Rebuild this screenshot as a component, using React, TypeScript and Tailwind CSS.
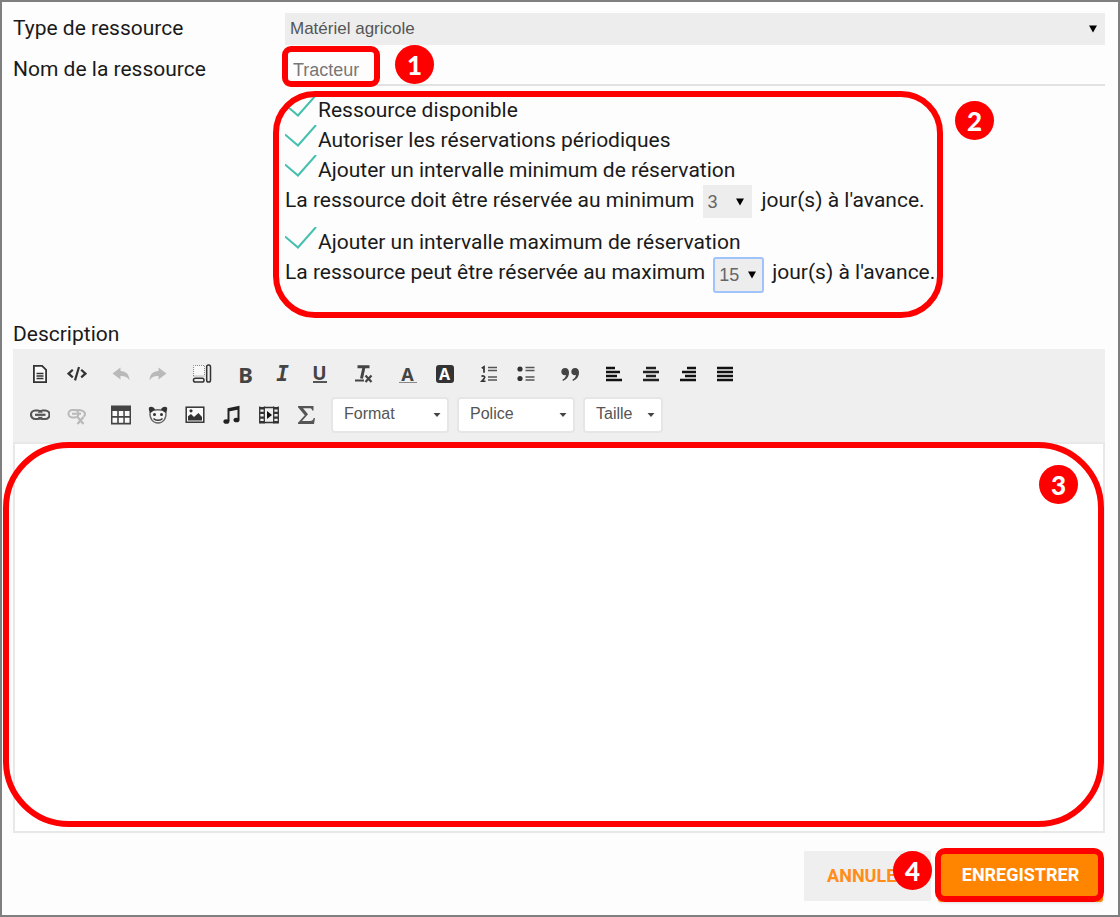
import type { ReactNode } from "react";

function Icon({ children, muted = false }: { children: ReactNode; muted?: boolean }) {
  return (
    <svg
      viewBox="0 0 20 20"
      aria-hidden="true"
      className={muted ? "size-5 text-[#b9b9b9]" : "size-5 text-[#333333]"}
      fill="none"
      stroke="currentColor"
      strokeWidth="2"
    >
      {children}
    </svg>
  );
}

function Letter({ children, className = "" }: { children: ReactNode; className?: string }) {
  return (
    <span className={`font-['Noto_Sans',sans-serif] font-bold text-[#444444] ${className}`}>{children}</span>
  );
}

type Tool = { name: string; icon: ReactNode };

const firstRow: Tool[][] = [
  [
    {
      name: "Modèles",
      icon: (
        <Icon>
          <path d="M3.9 1.9h8.2l4 4v12.2H3.9z" strokeWidth="1.8" fill="#fafafa" />
          <path d="M6.5 9.5h7M6.5 12h7M6.5 14.5h7" strokeWidth="1.5" />
        </Icon>
      ),
    },
    {
      name: "Source",
      icon: (
        <Icon>
          <path d="M5.8 5.8L1.6 9.6l4.2 3.8M14.2 5.8l4.2 3.8-4.2 3.8M12 3L8 16.4" strokeWidth="2.2" />
        </Icon>
      ),
    },
  ],
  [
    {
      name: "Annuler la saisie",
      icon: (
        <Icon muted>
          <path
            d="M9.500 3.500L1.500 9.500l8 6v-3.500c4-.3 6.500 1 9 4.200C18.300 10.500 15 7.300 9.500 7z"
            fill="currentColor"
            stroke="none"
          />
        </Icon>
      ),
    },
    {
      name: "Rétablir la saisie",
      icon: (
        <Icon muted>
          <path
            d="M10.500 3.500l8 6-8 6v-3.500c-4-.3-6.500 1-9 4.200C1.700 10.500 5 7.300 10.500 7z"
            fill="currentColor"
            stroke="none"
          />
        </Icon>
      ),
    },
  ],
  [
    {
      name: "Afficher les blocs",
      icon: (
        <Icon>
          <path d="M1.500 12V1.500h11V12z" strokeWidth="1" strokeDasharray="1 1" fill="#f8f8f8" stroke="#888888" />
          <rect x="1.500" y="14.200" width="10.500" height="3.800" rx="1.800" strokeWidth="1.500" />
          <rect x="14.700" y="1" width="3.800" height="17" rx="1.800" strokeWidth="1.500" />
        </Icon>
      ),
    },
  ],
  [
    { name: "Gras", icon: <Letter className="text-[22px]">B</Letter> },
    {
      name: "Italique",
      icon: (
        <span className="font-['DejaVu_Sans_Mono',monospace] text-[21px] font-bold italic text-[#444444]">I</span>
      ),
    },
    {
      name: "Souligné",
      icon: (
        <span className="flex flex-col items-center">
          <Letter className="text-[19px] leading-4">U</Letter>
          <span className="h-0.5 w-3.5 bg-[#555555]" />
        </span>
      ),
    },
  ],
  [
    {
      name: "Supprimer la mise en forme",
      icon: (
        <svg viewBox="0 0 20 20" aria-hidden="true" className="size-5 text-[#444444]" fill="none" stroke="currentColor">
          <path d="M3.500 2.800h12M10 3L7.500 14.500" strokeWidth="3" />
          <path d="M1 16.500h9" strokeWidth="2" />
          <path d="M11.500 11.500l6 6.500M17.500 11.500l-6 6.500" strokeWidth="2.200" />
        </svg>
      ),
    },
  ],
  [
    {
      name: "Couleur du texte",
      icon: (
        <span className="flex flex-col items-center">
          <Letter className="text-[18px] leading-4">A</Letter>
          <span className="h-px w-[18px] bg-[#888888]" />
        </span>
      ),
    },
    {
      name: "Couleur de fond",
      icon: (
        <span className="flex size-[18px] items-center justify-center rounded-[3px] bg-[#333333] font-['Noto_Sans',sans-serif] text-base leading-4 font-bold text-white">
          A
        </span>
      ),
    },
  ],
  [
    {
      name: "Liste numérotée",
      icon: (
        <Icon>
          <path d="M9 3.500h9M9 6.500h9M9 13h9M9 16h9" strokeWidth="1.600" stroke="#555555" />
          <path d="M2.800 4.300L5 2.800v6" strokeWidth="1.700" />
          <path d="M2.500 12.500c1-1 3.300-.8 3.200.8 0 1.200-1.700 2.500-3 4h3.800" strokeWidth="1.600" />
        </Icon>
      ),
    },
    {
      name: "Liste à puces",
      icon: (
        <Icon>
          <path d="M9.500 3.500h9M9.500 6.500h9M9.500 13h9M9.500 16h9" strokeWidth="1.600" stroke="#555555" />
          <circle cx="4" cy="5" r="2.600" fill="currentColor" stroke="none" />
          <circle cx="4" cy="14.500" r="2.600" fill="currentColor" stroke="none" />
        </Icon>
      ),
    },
  ],
  [
    {
      name: "Citation",
      icon: (
        <Icon>
          <g fill="#444444" stroke="none">
            <path d="M5 4c2.600 0 4 1.800 4 4.500 0 4-2.300 7-6 8.500l-.6-1.200C4.600 14.500 5.700 13 5.900 11 3.500 11.600 1.300 10.200 1.300 7.700 1.300 5.600 2.900 4 5 4z" />
            <path d="M15 4c2.600 0 4 1.800 4 4.500 0 4-2.300 7-6 8.500l-.6-1.200c2.200-1.300 3.300-2.800 3.500-4.800-2.400.6-4.600-.8-4.600-3.300C11.300 5.600 12.900 4 15 4z" />
          </g>
        </Icon>
      ),
    },
  ],
  [
    {
      name: "Aligner à gauche",
      icon: (
        <Icon>
          <path d="M2 4h9M2 8h14M2 12h11M2 16h16" stroke="#111111" strokeWidth="2.400" />
        </Icon>
      ),
    },
    {
      name: "Centrer",
      icon: (
        <Icon>
          <path d="M5 4h10M2 8h16M5 12h10M2 16h16" stroke="#222222" strokeWidth="2.400" />
        </Icon>
      ),
    },
    {
      name: "Aligner à droite",
      icon: (
        <Icon>
          <path d="M9 4h9M4 8h14M7 12h11M2 16h16" stroke="#111111" strokeWidth="2.400" />
        </Icon>
      ),
    },
    {
      name: "Justifier",
      icon: (
        <Icon>
          <path d="M2 4h16M2 8h16M2 12h16M2 16h16" stroke="#111111" strokeWidth="2.600" />
        </Icon>
      ),
    },
  ],
];

const secondRow: Tool[][] = [
  [
    {
      name: "Lien",
      icon: (
        <Icon>
          <g stroke="#555555">
            <rect x="1" y="5.500" width="11" height="8.500" rx="4.200" strokeWidth="2.200" />
            <rect x="8.500" y="5.500" width="11" height="8.500" rx="4.200" strokeWidth="2.200" />
            <path d="M5 9.800h10.500" strokeWidth="4" stroke="#efefef" />
            <path d="M5 9.800h10.500" strokeWidth="2.200" />
          </g>
        </Icon>
      ),
    },
    {
      name: "Supprimer le lien",
      icon: (
        <Icon muted>
          <rect x="1.500" y="5" width="10" height="7.500" rx="3.700" strokeWidth="2" />
          <path d="M9 5.500c4-1.500 9 .5 9 3.500 0 1-.5 2-1.500 2.600M5 8.800h9" strokeWidth="2" />
          <path d="M10.500 12l6 7M16.500 12l-6 7" strokeWidth="2.200" />
        </Icon>
      ),
    },
  ],
  [
    {
      name: "Tableau",
      icon: (
        <Icon>
          <rect x="0" y="0.500" width="20" height="19" fill="#444444" stroke="none" />
          <g fill="#fafafa" stroke="none">
            <path d="M1.500 6h4.700v5H1.500zM7.800 6h4.500v5H7.800zM13.800 6h4.700v5h-4.700zM1.500 12.800h4.700v5H1.500zM7.800 12.800h4.500v5H7.800zM13.800 12.800h4.700v5h-4.700z" />
          </g>
        </Icon>
      ),
    },
    {
      name: "Émoticône",
      icon: (
        <Icon>
          <path d="M2 7c-.5 7 3 11 8 11s8.500-4 8-11c-2-3-14-3-16 0z" strokeWidth="1.300" stroke="#666666" fill="#f4f4f4" />
          <path d="M1 2.500C3 1 6 2 7 4.500L2.500 8C1 6.500.5 4 1 2.500zM19 2.500c-2-1.500-5-.5-6 2L17.500 8c1.500-1.500 2-4 1.500-5.500z" fill="currentColor" stroke="none" />
          <circle cx="6.500" cy="9.500" r="1.500" fill="currentColor" stroke="none" />
          <circle cx="13.500" cy="9.500" r="1.500" fill="currentColor" stroke="none" />
          <path d="M5.500 13.500c2 2.300 7 2.300 9 0" strokeWidth="1.300" />
        </Icon>
      ),
    },
    {
      name: "Image",
      icon: (
        <Icon>
          <rect x="1.200" y="2.200" width="17.600" height="15" strokeWidth="1.500" fill="#fafafa" />
          <path d="M3 15.500v-4.200l3-2.300 3 3 4.500-4L17 12v3.500z" fill="currentColor" stroke="none" />
          <circle cx="6" cy="5.800" r="1.600" fill="currentColor" stroke="none" />
        </Icon>
      ),
    },
    {
      name: "Son",
      icon: (
        <Icon>
          <path d="M6.500 16V4L16.500 2v12.500M6.500 5.500l10-2" stroke="#222222" />
          <ellipse cx="4.400" cy="16.500" rx="3" ry="2.300" fill="#222222" stroke="none" />
          <ellipse cx="14.500" cy="15" rx="3" ry="2.300" fill="#222222" stroke="none" />
        </Icon>
      ),
    },
    {
      name: "Vidéo",
      icon: (
        <Icon>
          <path d="M.7 1.500v17M5.300 1.500v17M14.700 1.500v17M19.300 1.500v17" strokeWidth="1.300" />
          <path d="M3 2v17M17 2v17" strokeWidth="4" strokeDasharray="2.400 2.300" />
          <path d="M5 2.500h10M5 17.500h10" strokeWidth="1.500" />
          <path d="M8 6l5 4-5 4z" fill="#111111" stroke="none" />
        </Icon>
      ),
    },
    {
      name: "Formule",
      icon: (
        <Icon>
          <path
            d="M2 1h15.500v4.500h-1.300c-.3-1.800-1-2.300-3-2.300H7L12 9.300 6 16h8c2.300 0 3-.8 3.700-3H19l-1 6H2v-1.200l6.800-7.600L2 2.200z"
            fill="#555555"
            stroke="none"
          />
        </Icon>
      ),
    },
  ],
];

function ToolGroups({ groups }: { groups: Tool[][] }) {
  return (
    <>
      {groups.map((group) => (
        <div key={group[0].name} className="flex">
          {group.map((tool) => (
            <button
              key={tool.name}
              type="button"
              aria-label={tool.name}
              className="flex h-9 w-[37px] items-center justify-center"
            >
              {tool.icon}
            </button>
          ))}
        </div>
      ))}
    </>
  );
}

function ToolSelect({ label, className }: { label: string; className: string }) {
  return (
    <div className="grid items-center">
      <select
        aria-label={label}
        className={`col-start-1 row-start-1 h-9 appearance-none rounded-[4px] border-2 border-[#e6e6e6] bg-white pb-0.5 pl-[11px] font-['Liberation_Sans',sans-serif] text-base text-[#555555] ${className}`}
      >
        <option>{label}</option>
      </select>
      <svg
        viewBox="0 0 8 4"
        aria-hidden="true"
        className="pointer-events-none col-start-1 row-start-1 mr-2 h-1 w-2 justify-self-end"
      >
        <path d="M0.500 0h7L4 4z" fill="#444444" />
      </svg>
    </div>
  );
}

function Caret() {
  return (
    <svg
      viewBox="0 0 8 8"
      aria-hidden="true"
      className="pointer-events-none col-start-1 row-start-1 mr-2 size-2 justify-self-end"
    >
      <path d="M0 0.500h8L4 7.500z" fill="#000000" />
    </svg>
  );
}

function CheckRow({ label }: { label: string }) {
  return (
    <label className="flex h-[30px] items-center">
      <span className="grid">
        <input type="checkbox" defaultChecked className="peer col-start-1 row-start-1 h-[30px] w-[33px] appearance-none" />
        <svg
          viewBox="0 0 33 30"
          aria-hidden="true"
          className="pointer-events-none invisible col-start-1 row-start-1 h-[30px] w-[33px] peer-checked:visible"
          fill="none"
          stroke="#45bfae"
          strokeWidth="2"
        >
          <path d="M0 9.500l13 11L31 0" />
        </svg>
      </span>
      {label}
    </label>
  );
}

function DelayRow({
  id,
  before,
  value,
  focused = false,
}: {
  id: string;
  before: string;
  value: string;
  focused?: boolean;
}) {
  return (
    <div className="flex h-[42px] items-start">
      <label htmlFor={id}>{before}</label>
      <div className={focused ? "mx-2 grid items-center" : "mx-[9px] grid items-center"}>
        <select
          id={id}
          defaultValue={value}
          className={
            focused
              ? "col-start-1 row-start-1 h-9 w-[51px] appearance-none rounded-[3px] border-2 border-[#a0c3fb] bg-[#ededed] pl-1 font-['Liberation_Sans',sans-serif] text-[18px] text-[#666666]"
              : "col-start-1 row-start-1 h-[33px] w-[49px] appearance-none bg-[#ededed] pl-1 font-['Liberation_Sans',sans-serif] text-[18px] text-[#666666]"
          }
        >
          <option>{value}</option>
        </select>
        <Caret />
      </div>
      <span>jour(s) à l'avance.</span>
    </div>
  );
}

function Badge({ number, className }: { number: number; className: string }) {
  return (
    <span
      className={`pointer-events-none absolute flex size-[39px] items-center justify-center rounded-full bg-[#ff0000] font-['Lato',sans-serif] text-[26px] leading-none font-black text-white ${className}`}
    >
      {number}
    </span>
  );
}

function Outline({ className }: { className: string }) {
  return <span aria-hidden="true" className={`pointer-events-none absolute border-6 border-[#ff0000] ${className}`} />;
}

export default function App() {
  return (
    <main className="min-h-screen border-2 border-[#7f7f7f] bg-[#fdfdfd] pt-[11px] pr-[13px] pb-3 pl-[11px] font-['Roboto',sans-serif] text-[21px] leading-[30px] text-[#1a1a1a]">
      <form>
        <div className="grid grid-cols-[272px_1fr]">
          <label htmlFor="type">Type de ressource</label>
          <div className="grid items-center">
            <select
              id="type"
              className="col-start-1 row-start-1 h-8 w-full appearance-none bg-[#ededed] pl-[5px] font-['Liberation_Sans',sans-serif] text-[17px] text-[#555555]"
            >
              <option>Matériel agricole</option>
            </select>
            <Caret />
          </div>

          <label htmlFor="name" className="pt-[9px]">
            Nom de la ressource
          </label>
          <div className="relative pt-2">
            <input
              id="name"
              type="text"
              defaultValue="Tracteur"
              className="block h-[33px] w-full border-b-2 border-[#e2e2e2] bg-transparent pt-1 pl-2 font-['Liberation_Sans',sans-serif] text-[18px] text-[#777777] outline-none"
            />
            <Outline className="top-px -left-[3px] h-[41px] w-[98px] rounded-[9px]" />
            <Badge number={1} className="top-0 left-[110px]" />
          </div>
        </div>

        <div className="relative ml-[272px] h-[233px] pt-[9px]">
          <CheckRow label="Ressource disponible" />
          <CheckRow label="Autoriser les réservations périodiques" />
          <CheckRow label="Ajouter un intervalle minimum de réservation" />
          <DelayRow id="min-delay" before="La ressource doit être réservée au minimum" value="3" />
          <CheckRow label="Ajouter un intervalle maximum de réservation" />
          <DelayRow id="max-delay" before="La ressource peut être réservée au maximum" value="15" focused />
          <Outline className="top-[5px] -left-3 h-[227px] w-[670px] rounded-[42px]" />
          <Badge number={2} className="top-[15px] left-[670px]" />
        </div>

        <label htmlFor="description" className="block">
          Description
        </label>
        <section className="relative">
          <div className="flex flex-col gap-[5px] bg-[#efefef] px-2 pt-[7px] pb-[9px]">
            <div className="flex flex-wrap gap-[7px]">
              <ToolGroups groups={firstRow} />
            </div>
            <div className="flex flex-wrap gap-[7px]">
              <ToolGroups groups={secondRow} />
              <div className="flex gap-2">
                <ToolSelect label="Format" className="w-[118px]" />
                <ToolSelect label="Police" className="w-[118px]" />
                <ToolSelect label="Taille" className="w-20" />
              </div>
            </div>
          </div>
          <textarea
            id="description"
            className="block h-[391px] w-full resize-none border-2 border-[#e8e8e8] bg-white p-4 outline-none"
          />
          <Outline className="top-[93px] right-px bottom-1.5 -left-2.5 rounded-[66px]" />
          <Badge number={3} className="top-[116px] right-[27px]" />
        </section>

        <div className="mt-[18px] mr-0.5 flex justify-end gap-[7px] text-[18px] font-bold">
          <button type="button" className="h-[50px] w-[127px] bg-[#efefef] text-[#ff8d1a]">
            ANNULER
          </button>
          <div className="relative">
            <button type="submit" className="block h-[51px] w-[165px] rounded-[3px] bg-[#ff8500] pb-1 text-white shadow">
              ENREGISTRER
            </button>
            <Outline className="-top-[3px] -right-px -left-[3px] h-[54px] rounded-[10px]" />
            <Badge number={4} className="top-0 -left-[45px]" />
          </div>
        </div>
      </form>
    </main>
  );
}
